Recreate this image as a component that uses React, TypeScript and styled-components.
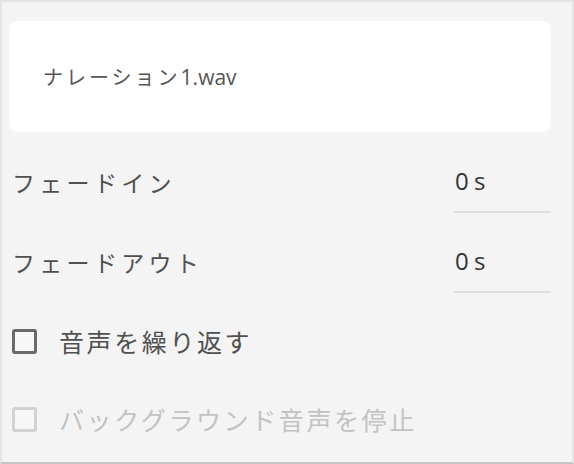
import React from "react";
import styled, { createGlobalStyle } from "styled-components";

const Global = createGlobalStyle`
  html, body { margin: 0; padding: 0; background: #f4f4f4; }
  body { font-family: "Noto Sans CJK JP", "Noto Sans", sans-serif; }
`;

const Frame = styled.div`
  box-sizing: border-box;
  width: 574px;
  height: 464px;
  background: #f4f4f4;
  border-top: 2px solid #e4e4e4;
  border-left: 2px solid #e4e4e4;
  border-right: 2px solid #e4e4e4;
  border-bottom: 2px solid #c4c4c4;
  padding: 19px 21px 0 7px;
  display: flex;
  flex-direction: column;
`;

const FileCard = styled.div`
  box-sizing: border-box;
  height: 111px;
  background: #ffffff;
  border-radius: 8px;
  padding: 0 0 0 34px;
  display: flex;
  align-items: center;
  margin-bottom: 10px;
`;

const FileName = styled.span`
  font-size: 20px;
  letter-spacing: 3px;
  color: #555555;
`;

const Ext = styled.span`
  letter-spacing: 0;
  font-family: "Open Sans", "Noto Sans", sans-serif;
  font-size: 21px;
`;

const FieldRow = styled.div`
  height: 80px;
  display: flex;
  justify-content: space-between;
  padding-left: 3px;
`;

const FieldLabel = styled.div`
  align-self: center;
  font-size: 23px;
  letter-spacing: 4.3px;
  color: #505050;
`;

const ValueBox = styled.div`
  box-sizing: border-box;
  width: 97px;
  height: 61px;
  margin-top: 10px;
  border-bottom: 2px solid #dedede;
  display: flex;
  align-items: center;
  padding-left: 1px;
  padding-bottom: 3px;
  font-family: "Open Sans", "Noto Sans", sans-serif;
  font-size: 24px;
  color: #333333;
  word-spacing: -1px;
`;

const CheckRow = styled.label`
  height: 78px;
  display: flex;
  align-items: center;
  gap: 22px;
  padding-left: 3px;
`;

const Box = styled.span<{ $disabled?: boolean }>`
  box-sizing: border-box;
  width: 25px;
  height: 25px;
  border: 3px solid ${(p) => (p.$disabled ? "#d2d2d2" : "#6a6a6a")};
  border-radius: 3px;
  background: #f7f7f7;
  flex: none;
`;

const CheckLabel = styled.span<{ $disabled?: boolean }>`
  font-size: 25px;
  letter-spacing: 2.6px;
  color: ${(p) => (p.$disabled ? "#c2c2c2" : "#505050")};
`;

export default function App() {
  return (
    <>
      <Global />
      <Frame>
        <FileCard>
          <FileName>
            ナレーション<Ext>1.wav</Ext>
          </FileName>
        </FileCard>
        <FieldRow>
          <FieldLabel>フェードイン</FieldLabel>
          <ValueBox>0 s</ValueBox>
        </FieldRow>
        <FieldRow>
          <FieldLabel>フェードアウト</FieldLabel>
          <ValueBox>0 s</ValueBox>
        </FieldRow>
        <CheckRow>
          <Box />
          <CheckLabel>音声を繰り返す</CheckLabel>
        </CheckRow>
        <CheckRow>
          <Box $disabled />
          <CheckLabel $disabled>バックグラウンド音声を停止</CheckLabel>
        </CheckRow>
      </Frame>
    </>
  );
}
